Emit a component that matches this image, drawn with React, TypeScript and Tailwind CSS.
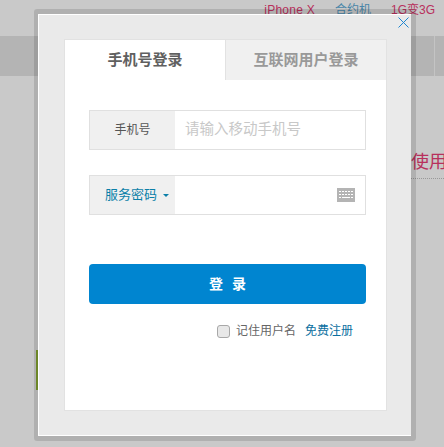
const cjk = "font-['Liberation_Sans','Noto_Sans_CJK_SC',sans-serif]"

function KeyboardIcon() {
  return (
    <svg width="18" height="14" viewBox="0 0 18 14" className="shrink-0">
      <rect width="18" height="14" fill="#b4b4b4" />
      <g fill="#fff">
        <rect x="2" y="3" width="2" height="1" />
        <rect x="5" y="3" width="2" height="1" />
        <rect x="8" y="3" width="2" height="1" />
        <rect x="11" y="3" width="2" height="1" />
        <rect x="14" y="3" width="2" height="1" />
        <rect x="2" y="6" width="2" height="1" />
        <rect x="5" y="6" width="2" height="1" />
        <rect x="8" y="6" width="2" height="1" />
        <rect x="11" y="6" width="2" height="1" />
        <rect x="14" y="6" width="2" height="1" />
        <rect x="2" y="9" width="2" height="1" />
        <rect x="5" y="9" width="8" height="1" />
        <rect x="14" y="9" width="2" height="1" />
      </g>
    </svg>
  )
}

function Background() {
  return (
    <div className="flex flex-col h-full">
      <div className="h-9 flex justify-end gap-5 pr-[9px] pt-[3px] text-[12px] leading-[14px] text-[#b8305c]">
        <span className="tracking-[0.25px]">iPhone X</span>
        <span className="text-[#4a86a8]">合约机</span>
        <span>1G变3G</span>
      </div>
      <div className="h-10 bg-[#b4b4b4] flex justify-end">
        <div className="w-[10px] border-l border-[#c4c4c4]" />
      </div>
      <div className="flex justify-end mt-[74px]">
        <span className="w-[33px] overflow-hidden whitespace-nowrap text-[18px] leading-[24px] text-[#b8305c] border-b border-dotted border-[#999] pb-[4px]">使用</span>
      </div>
    </div>
  )
}

export default function App() {
  return (
    <div className={`relative w-[444px] h-[447px] overflow-hidden bg-[#c9c9c9] ${cjk}`}>
      <Background />
      <div className="absolute left-[36px] top-[350px] w-[2px] h-10 bg-[#7d9a2e]" />

      {/* login dialog */}
      <div className="absolute left-[34px] top-[9px] w-[382px] h-[432px] rounded-[3px] border-[5px] border-l-4 border-black/[0.12] bg-clip-padding">
        <div className="relative h-full border-t border-l border-b border-white bg-[#eaeaea] pt-6 pl-[25px] pr-6 pb-[24px]">
          <button className="absolute right-[2px] top-[2px]" aria-label="关闭">
            <svg width="11" height="11" viewBox="0 0 11 11" fill="none" stroke="#1f86d0" strokeWidth="1">
              <path d="M0.5 0.5 10.5 10.5M10.5 0.5 0.5 10.5" />
            </svg>
          </button>

          <div className="h-full bg-white border border-[#e2e2e2]">
            <div className="flex h-10">
              <div className="w-[160px] flex items-center justify-center text-[15px] font-bold text-[#606060]">手机号登录</div>
              <div className="flex-1 flex items-center justify-center bg-[#f0f0f0] border-l border-[#e2e2e2] text-[15px] font-bold text-[#999]">互联网用户登录</div>
            </div>

            <div className="flex flex-col pl-6 pr-5 pt-[30px]">
              <div className="flex h-10 border border-[#e0e0e0]">
                <div className="w-[85px] flex items-center justify-center bg-[#f0f0f0] text-[12px] text-[#555]">手机号</div>
                <div className="flex-1 flex items-center pl-[10px] text-[14.5px] text-[#c8c8c8]">请输入移动手机号</div>
              </div>

              <div className="flex h-10 border border-[#e0e0e0] mt-[25px]">
                <div className="w-[85px] flex items-center pl-[15px] bg-[#f0f0f0] text-[13px] text-[#0b7fa8]">
                  服务密码
                  <span className="ml-[6px] mt-[1px] w-0 h-0 border-x-[3px] border-x-transparent border-t-[3px] border-t-[#0b7fa8]" />
                </div>
                <div className="flex-1 flex items-center justify-end pr-[10px]">
                  <KeyboardIcon />
                </div>
              </div>

              <button className="h-10 mt-[49px] rounded-[4px] bg-[#0085d0] text-white text-[14px] font-bold tracking-[9px] pl-[9px]">登录</button>

              <div className="flex items-center mt-[19px] pl-[128px] text-[12px] leading-4">
                <span className="w-[13px] h-[13px] rounded-[3px] border border-[#a8a8a8] bg-[#e8e8e8]" />
                <span className="ml-[6px] text-[#666]">记住用户名</span>
                <span className="ml-[9px] text-[#0b6fa0]">免费注册</span>
              </div>
            </div>
          </div>
        </div>
      </div>
    </div>
  )
}
